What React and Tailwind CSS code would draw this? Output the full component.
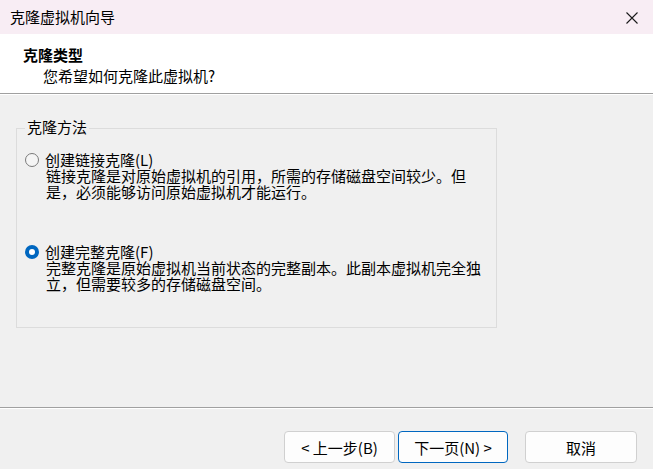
import React, { useState } from 'react';

const font = { fontFamily: '"Segoe UI", "Noto Sans CJK SC", "Noto Sans", sans-serif' };

const Radio = ({ checked }) =>
    checked ? (
        <span className="w-[14px] h-[14px] rounded-full bg-[#0067c0] flex items-center justify-center shrink-0">
            <span className="w-[6px] h-[6px] rounded-full bg-white" />
        </span>
    ) : (
        <span className="w-[14px] h-[14px] rounded-full border border-[#7a7a7a] bg-[#f5f5f5] shrink-0" />
    );

const Option = ({ checked, label, hotkey, lines, onPick, className = '' }) => (
    <div className={`flex flex-col ${className}`} onClick={onPick}>
        <div className="flex items-center h-[16px] leading-[16px]">
            <Radio checked={checked} />
            <span className="ml-[6px] whitespace-nowrap">
                {label}({hotkey})
            </span>
        </div>
        <div className="pl-[21px] leading-[16px] whitespace-nowrap">
            {lines.map((l) => (
                <div key={l}>{l}</div>
            ))}
        </div>
    </div>
);

const Button = ({ children, primary, className = '' }) => (
    <button
        className={`h-[32px] rounded-[4px] border bg-[#fdfdfd] text-[15px] text-black leading-none ${
            primary ? 'border-[#0067c0]' : 'border-[#d0d0d0]'
        } ${className}`}
    >
        {children}
    </button>
);

export default function App() {
    const [mode, setMode] = useState('full');

    return (
        <div className="w-[653px] h-[469px] bg-[#f0f0f0] text-black text-[15px] overflow-hidden flex flex-col" style={font}>
            {/* title bar */}
            <div className="h-[34px] bg-[#f8edf4] flex items-center justify-between pl-[10px] pr-[15px]">
                <span className="leading-[20px]">克隆虚拟机向导</span>
                <svg width="12" height="12" viewBox="0 0 12 12" className="mt-[1px]">
                    <path d="M0.5 0.5 L11.5 11.5 M11.5 0.5 L0.5 11.5" stroke="#1a1a1a" strokeWidth="1.1" fill="none" />
                </svg>
            </div>

            {/* header */}
            <div className="h-[60px] bg-white border-b border-[#a0a0a0] pt-[11px]">
                <div className="pl-[23px] font-bold leading-[20px]">克隆类型</div>
                <div className="pl-[43px] leading-[22px]">您希望如何克隆此虚拟机?</div>
            </div>

            {/* body */}
            <div className="h-[314px] border-t border-white border-b border-b-[#a0a0a0] pt-[33px] pl-[16px]">
                <div className="relative w-[481px] h-[200px] border border-[#dcdcdc] pl-[8px] pt-[23px]">
                    <span className="absolute top-[-11px] left-[8px] px-[2px] bg-[#f0f0f0] leading-[18px]">克隆方法</span>
                    <Option
                        checked={mode === 'linked'}
                        onPick={() => setMode('linked')}
                        label="创建链接克隆"
                        hotkey="L"
                        lines={['链接克隆是对原始虚拟机的引用，所需的存储磁盘空间较少。但', '是，必须能够访问原始虚拟机才能运行。']}
                    />
                    <Option
                        className="mt-[44px]"
                        checked={mode === 'full'}
                        onPick={() => setMode('full')}
                        label="创建完整克隆"
                        hotkey="F"
                        lines={['完整克隆是原始虚拟机当前状态的完整副本。此副本虚拟机完全独', '立，但需要较多的存储磁盘空间。']}
                    />
                </div>
            </div>

            {/* footer */}
            <div className="flex-1 border-t border-white flex justify-end items-start pt-[22px] pr-[16px]">
                <Button className="w-[111px]">&lt; 上一步(B)</Button>
                <Button primary className="w-[110px] ml-[3px]">下一页(N) &gt;</Button>
                <Button className="w-[112px] ml-[17px]">取消</Button>
            </div>
        </div>
    );
}
